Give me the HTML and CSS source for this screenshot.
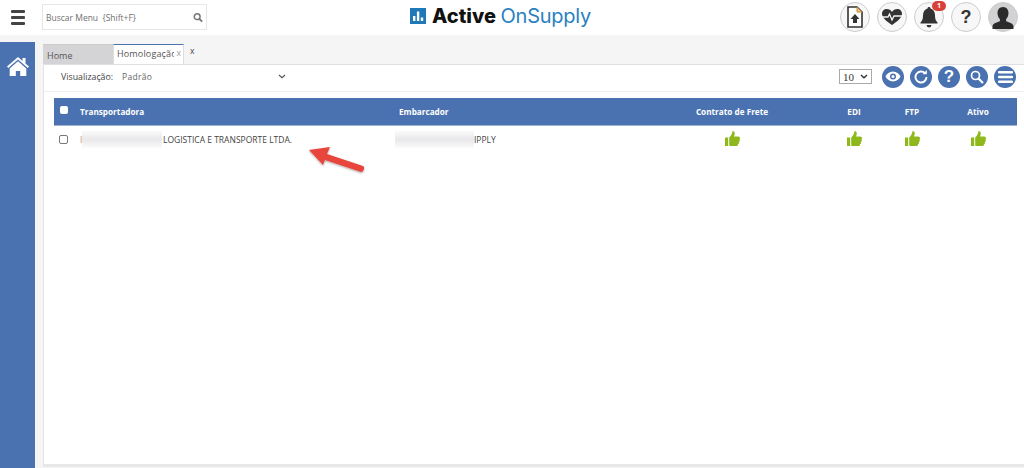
FILE: index.html
```html
<!DOCTYPE html>
<html lang="en">
<head>
  <title>Active OnSupply</title>
  <link rel="stylesheet" href="styles.css">
</head>
<body>
  <header class="topbar">
    <div class="menu-btn"><span></span><span></span><span></span></div>
    <div class="search">
      <span>Buscar Menu&nbsp; {Shift+F}</span>
      <svg width="10" height="11" viewBox="0 0 12 12"><circle cx="5" cy="5" r="3.5" fill="none" stroke="#777" stroke-width="1.8"/><path d="M7.6 7.6L11 11" stroke="#777" stroke-width="2.2"/></svg>
    </div>
    <div class="logo">
      <svg width="16" height="16" viewBox="0 0 16 16"><rect width="16" height="16" fill="#1f78b8"/><path d="M3 8h2.4v5H3zM6.9 3.5h2.4V13H6.9zM10.8 9.5h2.4V13h-2.4z" fill="#fff"/></svg>
      <span class="logo-text"><b>Active</b> <span class="logo-light">OnSupply</span></span>
    </div>
    <div class="top-icons">
      <div class="round">
        <svg width="18" height="22" viewBox="0 0 18 22"><path d="M2 1h9l5 5v15H2z" fill="#fff" stroke="#333" stroke-width="1.6"/><path d="M11 1v5h5" fill="#f0c27a" stroke="#c98a2b" stroke-width="1"/><path d="M9 8l4.5 5H11v4H7v-4H4.500z" fill="#333"/></svg>
      </div>
      <div class="round">
        <svg width="22" height="18" viewBox="0 0 22 18"><path d="M11 17C5 13 1 9.500 1 5.500 1 2.800 3.200 1 5.700 1 8 1 10 2.200 11 4c1-1.800 3-3 5.300-3C18.800 1 21 2.800 21 5.500c0 4-4 7.500-10 11.500z" fill="#333"/><path d="M1 9h6l1.500-3 2.500 6 2-4h8" fill="none" stroke="#f5f5f5" stroke-width="1.300"/></svg>
      </div>
      <div class="round">
        <svg width="18" height="22" viewBox="0 0 18 22"><path d="M9 1c1 0 1.500.7 1.500 1.500C13.500 3.300 15 6 15 9.500c0 4 1 5.500 2.500 7v1h-17v-1C2 15 3 13.500 3 9.500 3 6 4.500 3.300 7.500 2.500 7.500 1.700 8 1 9 1z" fill="#333"/><path d="M6.500 19h5a2.500 2.500 0 0 1-5 0z" fill="#333"/></svg>
        <span class="badge">1</span>
      </div>
      <div class="round help">?</div>
      <div class="round avatar">
        <svg width="22" height="24" viewBox="0 0 22 24"><path d="M11 1c3.600 0 5.500 2.800 5.500 6 0 2.600-1 4.700-2.400 6v2c1 1 6.900 2 7.400 5v3H.5v-3c.5-3 6.400-4 7.400-5v-2C6.500 11.700 5.500 9.600 5.500 7c0-3.200 1.900-6 5.500-6z" fill="#2b2b2b"/></svg>
      </div>
    </div>
  </header>

  <div class="main">
    <aside class="sidebar">
      <svg width="24" height="21" viewBox="0 0 24 21"><path d="M12 1L1 10.500l1.200 1.400L12 3.500l9.800 8.400 1.200-1.400-3.500-3V2h-3v2.900z" fill="#fff"/><path d="M12 5.300L3.700 12.400V20h6.100v-5h4.400v5h6.100v-7.600z" fill="#fff"/></svg>
    </aside>

    <section class="content">
      <nav class="tabs">
        <div class="tab tab-home">Home</div>
        <div class="tab tab-active"><span class="tab-label">Homologação</span><span class="tab-x">x</span></div>
        <div class="tab-close">x</div>
      </nav>

      <div class="panel">
        <div class="toolbar">
          <span class="view-label">Visualização:</span>
          <div class="view-select">
            <span>Padrão</span>
            <svg width="8" height="5" viewBox="0 0 8 5"><path d="M1 1l3 2.800L7 1" fill="none" stroke="#555" stroke-width="1.200"/></svg>
          </div>
          <div class="page-size">
            <span>10</span>
            <svg width="8" height="5" viewBox="0 0 8 5"><path d="M1 1l3 2.800L7 1" fill="none" stroke="#333" stroke-width="1.400"/></svg>
          </div>
          <div class="tools">
            <div class="tool">
              <svg width="16" height="11" viewBox="0 0 16 11"><path d="M8 .5c3.500 0 6.200 2.300 7.500 5-1.300 2.700-4 5-7.500 5S1.800 8.200.5 5.500C1.800 2.800 4.500.5 8 .5z" fill="#fff"/><circle cx="8" cy="5.500" r="3" fill="#4a72b0"/><circle cx="8" cy="5.500" r="1.500" fill="#fff"/></svg>
            </div>
            <div class="tool">
              <svg width="14" height="14" viewBox="0 0 14 14"><path d="M11 3.200A5.500 5.500 0 1 0 12.500 7" fill="none" stroke="#fff" stroke-width="1.900"/><path d="M8.500 4.200h4.300V0z" fill="#fff"/></svg>
            </div>
            <div class="tool tool-help">?</div>
            <div class="tool">
              <svg width="14" height="14" viewBox="0 0 14 14"><circle cx="5.500" cy="5.500" r="4" fill="none" stroke="#fff" stroke-width="1.700"/><path d="M8.500 8.500L13 13" stroke="#fff" stroke-width="2.200"/></svg>
            </div>
            <div class="tool">
              <svg width="15" height="12" viewBox="0 0 15 12"><path d="M1 0h13a1 1 0 0 1 0 2.400H1A1 1 0 0 1 1 0zM1 4.800h13a1 1 0 0 1 0 2.400H1a1 1 0 0 1 0-2.400zM1 9.600h13a1 1 0 0 1 0 2.400H1a1 1 0 0 1 0-2.400z" fill="#fff"/></svg>
            </div>
          </div>
        </div>

        <div class="grid-wrap">
          <div class="row row-head">
            <div class="check-cell"><span class="check check-head"></span></div>
            <div>Transportadora</div>
            <div>Embarcador</div>
            <div class="center">Contrato de Frete</div>
            <div class="center">EDI</div>
            <div class="center">FTP</div>
            <div class="center">Ativo</div>
          </div>
          <div class="row row-body">
            <div class="check-cell"><span class="check"></span></div>
            <div class="masked"><span class="leak">I</span><span class="blur blur-a"></span>LOGISTICA E TRANSPORTE LTDA.</div>
            <div class="masked"><span class="blur blur-b"></span>IPPLY</div>
            <div class="center"><svg class="thumb" viewBox="0 0 15 15"><use href="#thumb"/></svg></div>
            <div class="center"><svg class="thumb" viewBox="0 0 15 15"><use href="#thumb"/></svg></div>
            <div class="center"><svg class="thumb" viewBox="0 0 15 15"><use href="#thumb"/></svg></div>
            <div class="center"><svg class="thumb" viewBox="0 0 15 15"><use href="#thumb"/></svg></div>
          </div>
        </div>
      </div>
    </section>
  </div>

  <!-- annotation arrow over the screenshot -->
  <svg class="arrow" width="60" height="40" viewBox="0 0 60 40">
    <defs><filter id="sh"><feDropShadow dx="0" dy="1" stdDeviation="1" flood-opacity=".35"/></filter></defs>
    <path d="M1 5L22 2l-3 7 36 12c2 1 1 6-2 6L17 15l-2 5z" fill="#e8453c" filter="url(#sh)"/>
  </svg>

  <svg width="0" height="0" class="defs">
    <symbol id="thumb" viewBox="0 0 15 15">
      <path d="M0 6.500h3.200V15H0zM4.200 6.500c1.700-1.500 3-3.500 3.300-6.500 1.500 0 2.300 1 2.300 2.500 0 1-.4 2.200-.9 3h4.300c1 0 1.800.8 1.800 1.700 0 .5-.2.900-.5 1.300.2.300.3.600.3 1 0 .7-.4 1.200-.9 1.500.1.300.1.500.1.800 0 .7-.4 1.200-1 1.500 0 1.200-.8 2.200-2.200 2.200H7.500c-1.400 0-2.300-.5-3.300-1z" fill="#8fb91a"/>
    </symbol>
  </svg>
</body>
</html>
```

FILE: styles.css
```css
* {
  box-sizing: border-box;
}

html, body {
  height: 100%;
}

body {
  margin: 0;
  overflow: hidden;
  position: relative;
  font-family: "Open Sans", Arial, sans-serif;
  font-size: 9px;
  color: #444;
  background-color: #f5f5f5;
}

.topbar {
  height: 35px;
  background-color: #fff;
  position: relative;
  display: flex;
  align-items: flex-start;
}

.menu-btn {
  width: 14px;
  margin: 10px 0 0 11px;
  display: flex;
  flex-direction: column;
  gap: 3px;
}

.menu-btn span {
  height: 3px;
  background-color: #444;
  border-radius: 1px;
}

.search {
  width: 165px;
  height: 26px;
  margin: 4px 0 0 17px;
  padding: 0 3px 0 3px;
  border: 1px solid #e6e6e6;
  display: flex;
  align-items: center;
  justify-content: space-between;
  color: #707070;
  font-size: 8.500px;
}

.logo {
  position: absolute;
  left: 410px;
  top: 6px;
  display: flex;
  align-items: center;
  gap: 6px;
}

.logo-text {
  font-family: Inter, Arial, sans-serif;
  font-size: 20px;
  line-height: 20px;
  color: #2a7fc1;
}

.logo-text b {
  color: #111;
  font-weight: 800;
}

.logo-light {
  letter-spacing: -.25px;
  margin-left: -1px;
}

.top-icons {
  margin-left: auto;
  padding: 2px 6px 0 0;
  display: flex;
  gap: 7px;
}

.round {
  width: 30px;
  height: 30px;
  border-radius: 50%;
  border: 1px solid #ccc;
  background-color: #f7f7f7;
  display: flex;
  align-items: center;
  justify-content: center;
  position: relative;
}

.help {
  font-family: "Liberation Sans", Arial, sans-serif;
  font-size: 18px;
  font-weight: bold;
  color: #333;
}

.avatar {
  background-color: #d2d2d4;
  align-items: flex-end;
  padding-bottom: 1px;
}

.badge {
  position: absolute;
  top: -2px;
  left: 17px;
  width: 14px;
  height: 10px;
  border-radius: 5px;
  background-color: #d9403a;
  color: #fff;
  font-size: 7px;
  font-weight: bold;
  line-height: 10px;
  text-align: center;
}

.main {
  display: flex;
  height: 433px;
}

.sidebar {
  width: 35px;
  height: 426px;
  margin-top: 7px;
  background-color: #4a72b0;
  padding: 14px 0 0 6px;
}

.content {
  flex: 1;
  margin-left: 8px;
  padding-top: 9px;
  display: flex;
  flex-direction: column;
  min-width: 0;
}

.tabs {
  height: 20px;
  display: flex;
  align-items: stretch;
}

.tab {
  font-size: 9px;
}

.tab-home {
  width: 70px;
  background-color: #d4d4d6;
  color: #555;
  padding: 4px 0 0 4px;
  border-top: 1px solid #ccc;
}

.tab-active {
  width: 71px;
  background-color: #fff;
  border-top: 1px solid #4a72b0;
  border-left: 1px solid #ddd;
  border-right: 1px solid #ddd;
  padding: 2px 0 0 3px;
  display: flex;
  justify-content: space-between;
  color: #555;
}

.tab-label {
  width: 57px;
  overflow: hidden;
  white-space: nowrap;
  letter-spacing: .15px;
}

.tab-x {
  color: #999;
  padding-right: 2px;
  font-size: 8.500px;
}

.tab-close {
  margin-left: 6px;
  padding-top: 1px;
  color: #444;
  font-size: 8.500px;
}

.panel {
  height: 403px;
  background-color: #fff;
  border-left: 1px solid #e4e4e4;
  border-top: 1px solid #e0e0e0;
  border-bottom: 3px solid #e8e8e8;
}

.toolbar {
  height: 27px;
  border-bottom: 1px solid #eee;
  display: flex;
  align-items: center;
  padding: 0 8px 3px 17px;
}

.view-label {
  width: 61px;
  color: #444;
  font-size: 8.800px;
}

.view-select {
  width: 164px;
  display: flex;
  justify-content: space-between;
  align-items: center;
  color: #666;
  font-size: 8.500px;
  letter-spacing: .3px;
}

.page-size {
  margin-left: auto;
  width: 33px;
  height: 15px;
  border: 1px solid #aaa;
  display: flex;
  align-items: center;
  justify-content: space-between;
  padding: 0 3px;
  font-family: "Liberation Serif", serif;
  font-size: 11px;
  color: #333;
}

.tools {
  margin-left: 10px;
  display: flex;
  gap: 6px;
}

.tool {
  width: 22px;
  height: 22px;
  border-radius: 50%;
  background-color: #4a72b0;
  display: flex;
  align-items: center;
  justify-content: center;
}

.tool-help {
  font-family: "Liberation Sans", Arial, sans-serif;
  font-size: 17px;
  font-weight: bold;
  color: #fff;
}

.grid-wrap {
  padding: 6px 7px 0 10px;
}

.row {
  display: grid;
  grid-template-columns: 26px 319px 241px 184px 60px 56px 76px;
  align-items: center;
}

.row-head {
  height: 28px;
  background-color: #4a72b0;
  border-bottom: 1px solid #9fb2d2;
  color: #fff;
  font-weight: bold;
  font-size: 8.200px;
}

.row-body {
  height: 27px;
  font-size: 8.500px;
  color: #444;
}

.center {
  text-align: center;
}

.check-cell {
  padding-left: 5px;
  display: flex;
}

.check {
  width: 9px;
  height: 9px;
  border: 1px solid #777;
  border-radius: 2px;
  background-color: #fff;
}

.check-head {
  width: 8px;
  height: 8px;
  border: none;
  margin: -3px 0 0 1px;
}

.masked {
  display: flex;
  align-items: center;
}

.leak {
  width: 1px;
  color: #c9935f;
}

.blur {
  height: 17px;
  background: linear-gradient(to bottom, #fbfbfb, #e8e8ea 50%, #fbfbfb);
}

.blur-a {
  width: 80px;
  margin: 0 1px;
}

.blur-b {
  width: 79px;
  margin-left: -4px;
}

.thumb {
  width: 15px;
  height: 15px;
  display: block;
  margin: -2px auto 0;
}

.arrow {
  position: absolute;
  left: 308px;
  top: 145px;
}

.defs {
  position: absolute;
}
```
